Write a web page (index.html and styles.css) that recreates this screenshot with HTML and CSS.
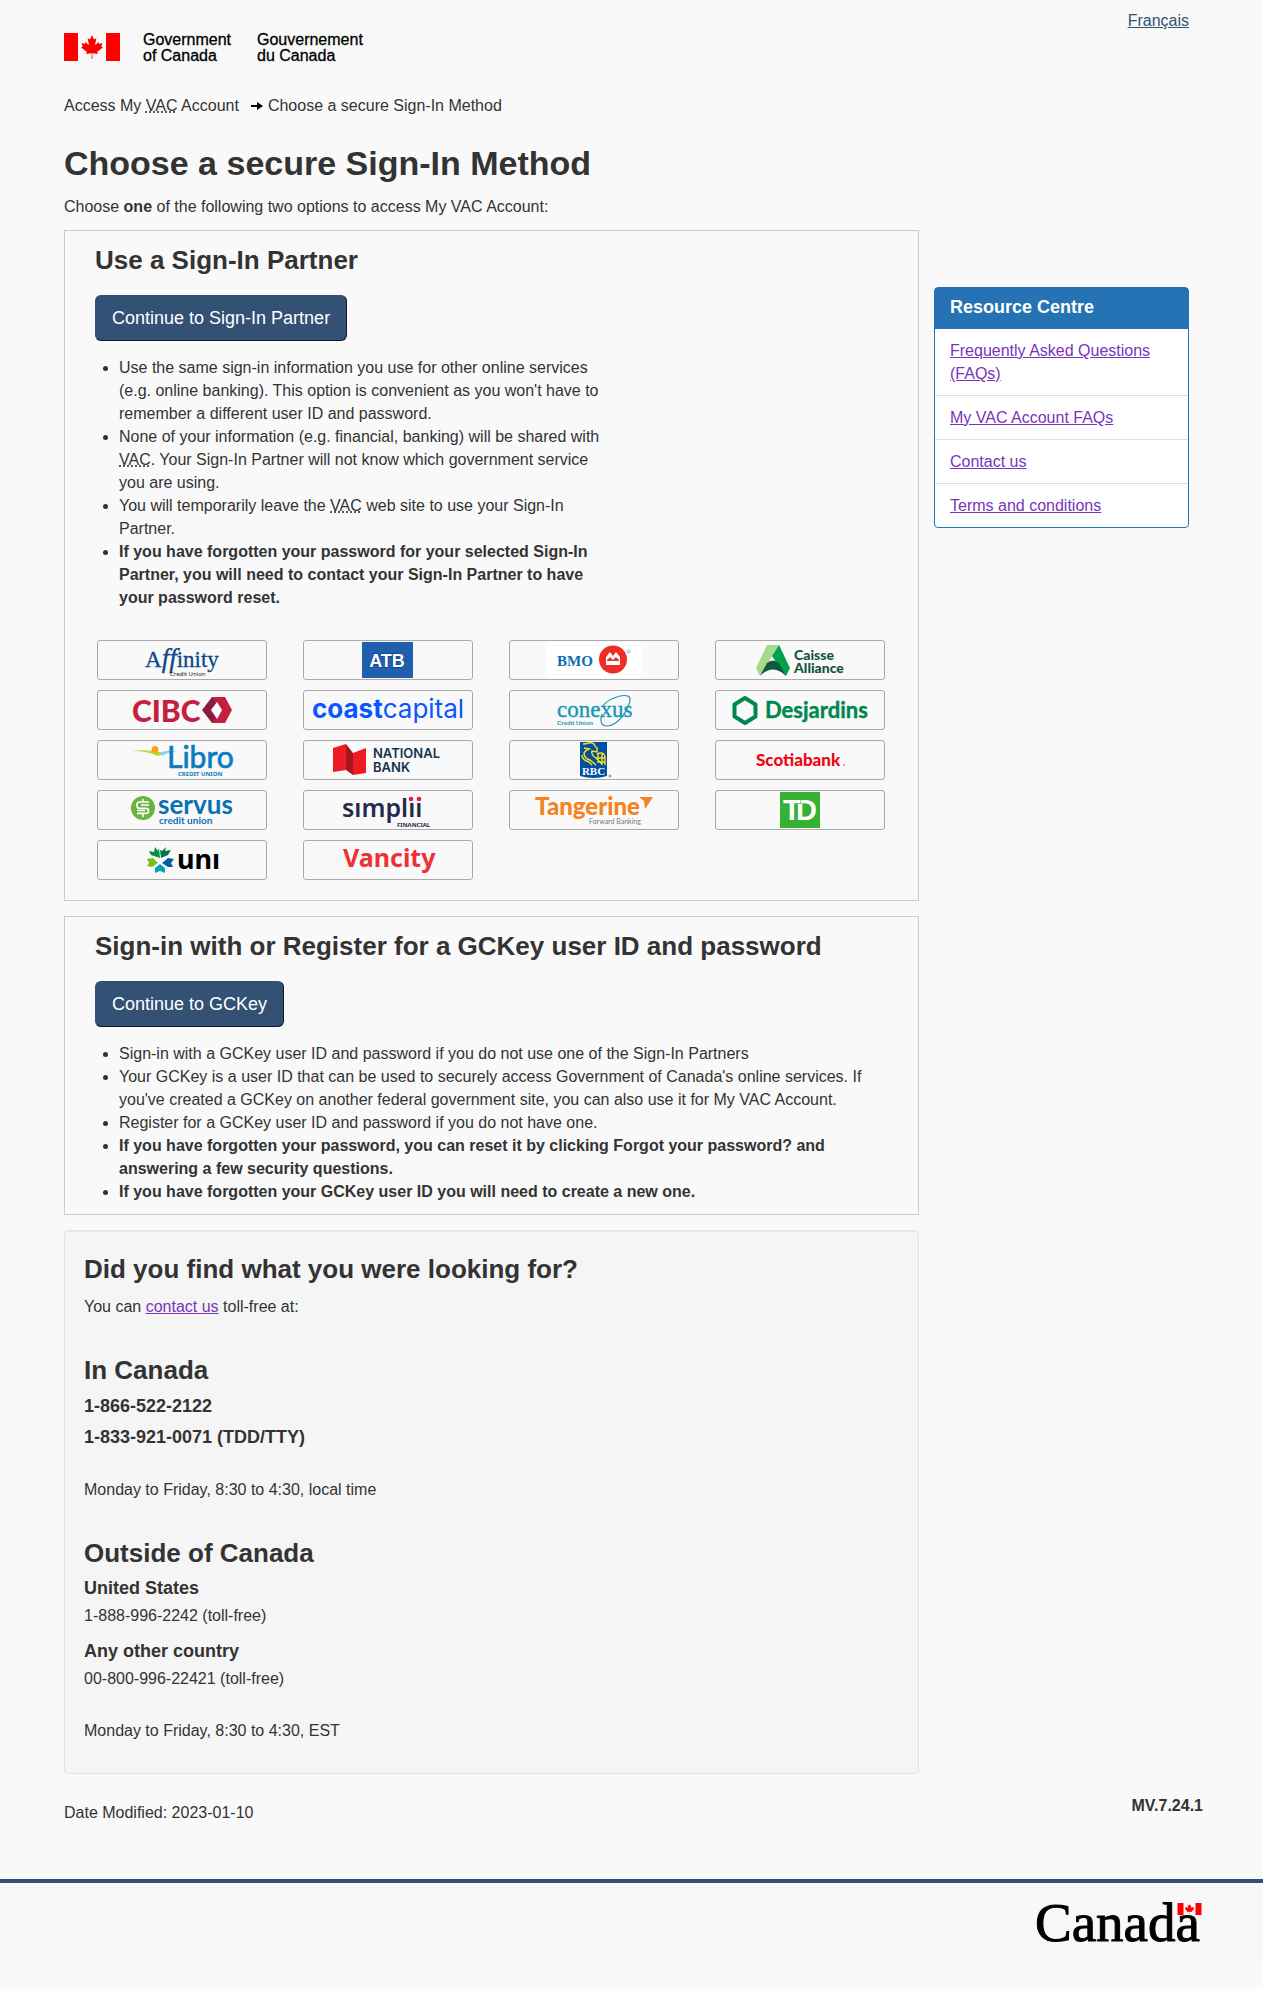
FILE: index.html
```html
<!DOCTYPE html>
<html lang="en">
<head>
<meta charset="utf-8">
<meta name="viewport" content="width=device-width, initial-scale=1">
<title>Choose a secure Sign-In Method</title>
<link rel="stylesheet" href="styles.css">
</head>
<body>
<svg class="defs" aria-hidden="true">
  <symbol id="flag" viewBox="0 0 9600 4800">
    <path fill="#f00" d="M0 0h2400v4800H0zM7200 0h2400v4800H7200zM4890 4430l-45-863a95 95 0 0 1 111-98l859 151-116-320a65 65 0 0 1 20-73l941-762-212-99a65 65 0 0 1-34-79l186-572-542 115a65 65 0 0 1-73-38l-105-247-423 454a65 65 0 0 1-111-57l204-1052-327 189a65 65 0 0 1-91-27l-332-652-332 652a65 65 0 0 1-91 27l-327-189 204 1052a65 65 0 0 1-111 57l-423-454-105 247a65 65 0 0 1-73 38l-542-115 186 572a65 65 0 0 1-34 79l-212 99 941 762a65 65 0 0 1 20 73l-116 320 859-151a95 95 0 0 1 111 98l-45 863z"/>
  </symbol>
</svg>

<header class="site-header">
  <svg class="brand" width="310" height="38" viewBox="0 -4 310 38" role="img" aria-label="Government of Canada / Gouvernement du Canada">
    <use href="#flag" width="56" height="28"/>
    <g class="brand-text">
      <text x="79" y="12">Government</text><text x="79" y="28">of Canada</text>
      <text x="193" y="12">Gouvernement</text><text x="193" y="28">du Canada</text>
    </g>
  </svg>
  <a class="lang" href="#" lang="fr">Français</a>
</header>

<nav class="wrap" aria-label="Breadcrumb">
  <ol class="crumbs">
    <li>Access My <abbr title="Veterans Affairs Canada">VAC</abbr> Account</li>
    <li><svg width="12" height="10" viewBox="0 0 12 10" aria-hidden="true"><path d="M0 4h6V1l6 4-6 4V6H0z"/></svg>Choose a secure Sign-In Method</li>
  </ol>
</nav>

<main class="wrap">
  <h1>Choose a secure Sign-In Method</h1>
  <p class="intro">Choose <strong>one</strong> of the following two options to access My VAC Account:</p>
  <div class="columns">
    <div class="content">
      <section class="option">
        <h2>Use a Sign-In Partner</h2>
        <button class="btn" type="button">Continue to Sign-In Partner</button>
        <ul class="notes notes-narrow">
          <li>Use the same sign-in information you use for other online services (e.g. online banking). This option is convenient as you won't have to remember a different user ID and password.</li>
          <li>None of your information (e.g. financial, banking) will be shared with <abbr title="Veterans Affairs Canada">VAC</abbr>. Your Sign-In Partner will not know which government service you are using.</li>
          <li>You will temporarily leave the <abbr title="Veterans Affairs Canada">VAC</abbr> web site to use your Sign-In Partner.</li>
          <li><strong>If you have forgotten your password for your selected Sign-In Partner, you will need to contact your Sign-In Partner to have your password reset.</strong></li>
        </ul>
        <ul class="partners">
          <li><svg viewBox="1 1 168 38"><g fill="#0b4a85" font-family="Liberation Serif, serif" font-size="23"><text x="48" y="27" stroke="#0b4a85" stroke-width=".3">A<tspan font-style="italic" font-size="27">ff</tspan>inity</text></g><text x="73" y="36" font-family="Noto Sans, sans-serif" font-size="6" fill="#222">Credit Union</text></svg></li>
          <li><svg viewBox="1 1 168 38"><path fill="#1f5fae" d="M59 2h51v36H59z"/><text x="84" y="27" text-anchor="middle" font-family="Liberation Sans, sans-serif" font-weight="700" font-size="18" fill="#fff" stroke="#0a3c80" stroke-width="1" paint-order="stroke">ATB</text></svg></li>
          <li><svg viewBox="1 1 168 38"><path fill="#fff" d="M38 2h94v36H38z"/><text x="48" y="26" font-family="Liberation Serif, serif" font-weight="700" font-size="15" fill="#0a6cb8">BMO</text><circle cx="104" cy="19.500" r="14" fill="#ee2e24"/><path fill="#fff" d="M97 25v-8l4-5 3 4 3-4 4 5v8z"/><path fill="#ee2e24" d="M98 20l3-3 3 3 3-3 3 3v1H98z"/><circle cx="119.500" cy="11.500" r="1.500" fill="none" stroke="#6ab0e0"/></svg></li>
          <li><svg viewBox="1 1 168 38"><path fill="#a9d98b" d="M52 5h12L45 36l-4-8z"/><path fill="#00a04f" d="M64 5l11 23-4 8-14-20z"/><path fill="#0c5b3f" d="M45 36l7-13q6-5 12 0l7 13q-13-13-26 0z"/><g font-family="Lato, sans-serif" font-weight="900" font-size="14" fill="#14543f"><text x="79" y="20">Caisse</text><text x="79" y="33">Alliance</text></g></svg></li>
          <li><svg viewBox="1 1 168 38"><text x="35" y="32" font-family="Lato, sans-serif" font-weight="900" font-size="30" fill="#c41f3e">CIBC</text><path fill="#8b1d41" d="M115 7h10L115 20l10 13h-10l-10-13z"/><path fill="#c41f3e" d="M115 7h13l7 13-7 13h-13l9-13z"/><path fill="#fff" d="M120 12l5 8-5 9-6-9z"/></svg></li>
          <li><svg viewBox="1 1 168 38"><text x="9" y="28" font-family="Inter, sans-serif" font-size="26" fill="#0a56ff" font-weight="700">coast<tspan font-weight="400">capital</tspan></text></svg></li>
          <li><svg viewBox="1 1 168 38"><g fill="#1a98b3"><text x="48" y="27" font-family="Liberation Serif, serif" font-size="23" stroke="#1a98b3" stroke-width=".4">conexus</text><text x="48" y="35" font-family="Liberation Sans, sans-serif" font-weight="700" font-size="6">Credit Union</text></g><path fill="none" stroke="#1a98b3" stroke-width="1.200" d="M93 17C101 6 121 2 121 9c0 9-12 27-23 27-7 0-7-7-5-12"/></svg></li>
          <li><svg viewBox="1 1 168 38"><path fill="none" stroke="#00874e" stroke-width="4" stroke-linejoin="round" d="M30 8l10.500 6.500v12L30 33l-10.500-6.500v-12z"/><text x="50" y="28" font-family="Lato, sans-serif" font-weight="700" font-size="22" fill="#00874e" stroke="#00874e" stroke-width=".4">Desjardins</text></svg></li>
          <li><svg viewBox="1 1 168 38"><path fill="#bed630" d="M34 11q16-2 26 1l6 0q-2 4-6 4-8-5-26-5z"/><path fill="#8ed0f2" d="M62 14q6-5 18-3-9 1-15 5z"/><circle cx="58" cy="9.500" r="3.500" fill="#f9a51a"/><text x="70" y="28" font-family="Lato, sans-serif" font-size="30" fill="#0a7cc1" stroke="#0a7cc1" stroke-width=".7">Libro</text><text x="81" y="36" font-family="Noto Sans, sans-serif" font-weight="700" font-size="6" fill="#0a7cc1">CREDIT UNION</text></svg></li>
          <li><svg viewBox="1 1 168 38"><path fill="#ed1c24" d="M30 8l13-4v26l-13 2zM50 13l13-5v25l-13 2z"/><path fill="#a8151c" d="M43 4l7 9v22l-7-5z"/><g font-family="Inter, sans-serif" font-weight="600" font-size="13" fill="#14344f"><text x="70" y="18">NATIONAL</text><text x="70" y="32">BANK</text></g></svg></li>
          <li><svg viewBox="1 1 168 38"><path fill="#0051a5" d="M71 2h27v34q-13 4-27 0z"/><path fill="none" stroke="#ffe014" stroke-width="1.400" d="M74 4q4 0 5-1 6-1 7 3 3 2 2 6l-5-1q-1 4 4 7l6 6M75 8l5 1q-5 2-5 5 1 5 6 6l6 5M73 15q0 5 7 7l3 3M88 14q7-3 8 3v8M87 18h9M89 13v7M93 13v12M88 22h8"/><text x="84.500" y="35" text-anchor="middle" font-family="Liberation Serif, serif" font-weight="700" font-size="11" fill="#fff">RBC</text><circle cx="101" cy="36" r="1" fill="none" stroke="#4c8fc9"/></svg></li>
          <li><svg viewBox="1 1 168 38"><text x="41" y="26" font-family="Lato, sans-serif" font-weight="900" font-size="17" fill="#ed0711">Scotiabank</text><circle cx="129" cy="25" r="1" fill="#f4777c"/></svg></li>
          <li><svg viewBox="1 1 168 38"><circle cx="46" cy="18" r="12" fill="#6cb33f"/><path fill="none" stroke="#fff" stroke-width="1.600" d="M52 12H43a3.200 3.200 0 0 0 0 6.400h6a2.500 2.500 0 0 1 0 5H40M52 15h-8M40 20.500h8M46 9v3M46 24v3"/><text x="61" y="24" font-family="Lato, sans-serif" font-weight="700" font-size="26" fill="#0a70b3">servus</text><text x="62" y="34" font-family="Lato, sans-serif" font-weight="700" font-size="10" fill="#0a70b3">credit union</text></svg></li>
          <li><svg viewBox="1 1 168 38"><text x="39" y="27" font-family="Noto Sans, sans-serif" font-weight="600" font-size="25" fill="#262a4a">sımplıı</text><circle cx="108" cy="9" r="2.300" fill="#ed1c35"/><circle cx="116" cy="9" r="2.300" fill="#ed1c35"/><text x="94" y="37" font-family="Noto Sans, sans-serif" font-weight="700" font-size="6" fill="#262a4a">FINANCIAL</text></svg></li>
          <li><svg viewBox="1 1 168 38"><text x="26" y="25" font-family="Lato, sans-serif" font-weight="900" font-size="24" fill="#f58220">Tangerine</text><path fill="#f58220" d="M130 7h14l-8 12-1-8z"/><text x="80" y="34" font-family="Lato, sans-serif" font-size="7" fill="#777">Forward Banking</text></svg></li>
          <li><svg viewBox="1 1 168 38"><path fill="#35b234" d="M65 2h40v36H65z"/><g font-family="Liberation Sans, sans-serif" font-weight="700" font-size="29" fill="#fff"><text x="81" y="30">D</text><text x="68" y="30" stroke="#35b234" stroke-width="1.500" paint-order="stroke">T</text></g></svg></li>
          <li><svg viewBox="1 1 168 38"><path fill="#00913f" d="M58 7l3 4 1-3 1 10-9-3-2-4 5 1z"/><path fill="#00754a" d="M69 7l-1 4 6-1-3 5-7 3-1-8 2 1z"/><path fill="#78be20" d="M50 19l6-1 5 5-6 4-5-1 2-3z"/><path fill="#005ea8" d="M77 19l-6-1-6 5 6 4 5 0-2-4z"/><path fill="#00a5b5" d="M63 24l5 4v5l-5-2-5 2v-5z"/><text x="80" y="29" font-family="Noto Sans, sans-serif" font-weight="700" font-size="27" fill="#000">unı</text></svg></li>
          <li><svg viewBox="1 1 168 38"><text x="40" y="27" font-family="Noto Sans, sans-serif" font-weight="700" font-size="25" fill="#ee3135">Vancity</text></svg></li>
        </ul>
      </section>

      <section class="option">
        <h2>Sign-in with or Register for a GCKey user ID and password</h2>
        <button class="btn" type="button">Continue to GCKey</button>
        <ul class="notes">
          <li>Sign-in with a GCKey user ID and password if you do not use one of the Sign-In Partners</li>
          <li>Your GCKey is a user ID that can be used to securely access Government of Canada's online services. If you've created a GCKey on another federal government site, you can also use it for My VAC Account.</li>
          <li>Register for a GCKey user ID and password if you do not have one.</li>
          <li><strong>If you have forgotten your password, you can reset it by clicking Forgot your password? and answering a few security questions.</strong></li>
          <li><strong>If you have forgotten your GCKey user ID you will need to create a new one.</strong></li>
        </ul>
      </section>

      <section class="well">
        <h2>Did you find what you were looking for?</h2>
        <p>You can <a href="#">contact us</a> toll-free at:</p>
        <h2 class="region">In Canada</h2>
        <p class="phone">1-866-522-2122</p>
        <p class="phone">1-833-921-0071 (TDD/TTY)</p>
        <p class="hours">Monday to Friday, 8:30 to 4:30, local time</p>
        <h2 class="region">Outside of Canada</h2>
        <h3>United States</h3>
        <p>1-888-996-2242 (toll-free)</p>
        <h3>Any other country</h3>
        <p>00-800-996-22421 (toll-free)</p>
        <p class="hours">Monday to Friday, 8:30 to 4:30, EST</p>
      </section>
    </div>

    <aside class="resources">
      <h2>Resource Centre</h2>
      <ul>
        <li><a href="#">Frequently Asked Questions (FAQs)</a></li>
        <li><a href="#">My VAC Account FAQs</a></li>
        <li><a href="#">Contact us</a></li>
        <li><a href="#">Terms and conditions</a></li>
      </ul>
    </aside>
  </div>
</main>

<div class="page-info">
  <p>Date Modified: <time datetime="2023-01-10">2023-01-10</time></p>
  <strong>MV.7.24.1</strong>
</div>

<footer class="site-footer">
  <svg width="168" height="42" viewBox="0 0 168 42" role="img" aria-label="Symbol of the Government of Canada">
    <text x="0" y="39" class="wordmark">Canada</text>
    <use href="#flag" x="142" y="1" width="25" height="12"/>
  </svg>
</footer>
</body>
</html>
```
FILE: styles.css
```css
* { box-sizing: border-box; }

body {
  margin: 0;
  background: #f9f9f9;
  color: #333;
  font: 16px/23px "Liberation Sans", Arial, sans-serif;
}

h1, h2, h3, p, ul, ol { margin: 0; }
ul, ol { padding: 0; }
a { color: #7834bc; }
svg { overflow: visible; }
.defs { position: absolute; width: 0; height: 0; }

.site-header {
  display: flex;
  justify-content: space-between;
  align-items: flex-start;
  height: 85px;
  margin: 0 45px 0 49px;
  padding: 9px 29px 0 15px;
  background: #f8f8f8;
}
.brand { display: block; margin-top: 20px; }
.brand-text { font-size: 16px; fill: #000; stroke: #000; stroke-width: .3px; }
.lang { color: #335075; }

.wrap { margin: 0 74px 0 64px; }

.crumbs { display: flex; gap: 12px; padding-top: 9px; list-style: none; }
.crumbs svg { margin-right: 5px; }

h1 { margin-top: 27px; font-size: 34px; line-height: 38px; }
.intro { margin: 13px 0 12px; }

.columns {
  display: grid;
  grid-template-columns: minmax(0, 1fr) 255px;
  gap: 15px;
  align-items: start;
}
.content { display: grid; gap: 15px; }

h2 { font-size: 26px; line-height: 29px; }
h3 { font-size: 18px; line-height: 23px; }

.option { padding: 15px 30px 10px; border: 1px solid #ccc; }
.option + .option { padding-bottom: 11px; }

.btn {
  display: block;
  margin-top: 20px;
  padding: 10px 16px;
  border: 1px solid;
  border-color: #335075 #0f1a28 #0f1a28 #335075;
  border-radius: 6px;
  background: #335075;
  color: #fff;
  font: 18px/24px "Liberation Sans", Arial, sans-serif;
}

.notes { margin-top: 15px; padding-left: 24px; }
.notes-narrow { max-width: 515px; }

.partners {
  display: grid;
  grid-template-columns: repeat(auto-fill, 170px);
  gap: 10px 36px;
  margin: 31px 0 10px;
  padding-left: 2px;
  list-style: none;
}
.partners li { height: 40px; border: 1px solid #a9a9a9; border-radius: 3px; }
.partners svg { display: block; width: 168px; height: 38px; }

.well {
  padding: 24px 19px 31px;
  border: 1px solid #e3e3e3;
  border-radius: 4px;
  background: #f5f5f5;
  box-shadow: inset 0 1px 1px rgba(0, 0, 0, .05);
}
.well h2 + p { margin-top: 11px; }
.well .region { margin-top: 38px; }
.well .region + .phone { margin-top: 10px; }
.well .phone { margin-bottom: 8px; font-size: 18px; font-weight: 700; }
.well h3 { margin: 9px 0 4px; }
.well p + h3 { margin-top: 13px; }
.well .hours { margin-top: 29px; }

.resources {
  margin-top: 57px;
  border: 1px solid #2572b4;
  border-radius: 4px;
  background: #fff;
}
.resources h2 {
  padding: 8px 15px 10px;
  background: #2572b4;
  color: #fff;
  font-size: 18px;
  line-height: 23px;
}
.resources ul { list-style: none; }
.resources li { padding: 10px 15px; }
.resources li + li { border-top: 1px solid #ddd; }

.page-info {
  display: flex;
  justify-content: space-between;
  align-items: flex-start;
  margin: 20px 60px 0 64px;
  padding-bottom: 55px;
}
.page-info p { margin-top: 7px; }

.site-footer {
  display: flex;
  justify-content: flex-end;
  padding: 19px 60px 18px;
  border-top: 4px solid #335075;
  background: #f8f8f8;
}
.wordmark { font: 55px "Liberation Serif", serif; fill: #000; stroke: #000; stroke-width: 1px; }
```
